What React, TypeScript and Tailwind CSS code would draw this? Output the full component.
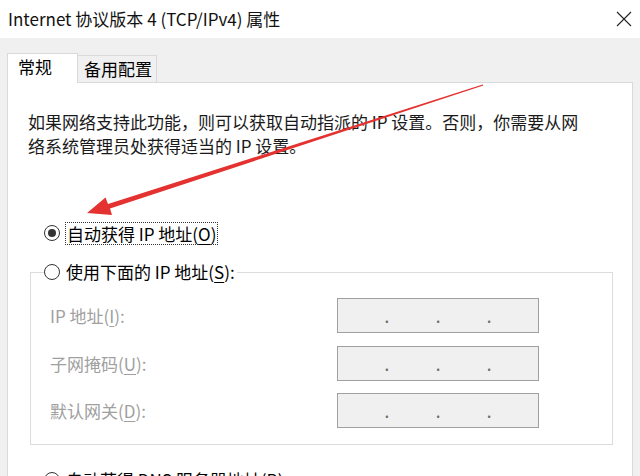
import React from "react";

const FONT = '"Noto Sans CJK SC", "Noto Sans", sans-serif';

function Radio({ checked }: { checked?: boolean }) {
  return (
    <span className="flex h-[16px] w-[16px] shrink-0 items-center justify-center rounded-full border border-[#333333] bg-white">
      {checked && <span className="h-[8px] w-[8px] rounded-full bg-[#333333]" />}
    </span>
  );
}

function IpBox() {
  return (
    <div className="flex h-[35px] w-[202px] items-center border border-[#a0a0a0] bg-[#f0f0f0] text-[13px] font-bold leading-none text-[#6d6d6d]">
      <span className="flex-1" />
      <span className="mt-[4px]">.</span>
      <span className="flex-1" />
      <span className="mt-[4px]">.</span>
      <span className="flex-1" />
      <span className="mt-[4px]">.</span>
      <span className="flex-1" />
    </div>
  );
}

function Row({ label, k, rest, mt }: { label: string; k: string; rest: string; mt: string }) {
  return (
    <div className={`flex items-center ${mt}`}>
      <div className="w-[287px] text-[17px] leading-[24px] text-[#a0a0a0]">
        {label}(<span className="underline underline-offset-[3px]">{k}</span>){rest}
      </div>
      <IpBox />
    </div>
  );
}

export default function App() {
  return (
    <div
      className="relative flex h-[476px] w-[640px] flex-col overflow-hidden bg-[#f0f0f0] text-black"
      style={{ fontFamily: FONT }}
    >
      {/* Title bar */}
      <div className="flex h-[38px] shrink-0 items-center justify-between bg-white pl-[8px] pr-[8px]">
        <span className="text-[17px] leading-[24px] text-[#111111]">Internet 协议版本 4 (TCP/IPv4) 属性</span>
        <svg width="16" height="16" viewBox="0 0 16 16">
          <path d="M1 1 L15 15 M15 1 L1 15" stroke="#222222" strokeWidth="1.1" fill="none" />
        </svg>
      </div>

      {/* Tabs */}
      <div className="mt-[15px] flex items-end pl-[7px]">
        <div className="relative z-10 -mb-px flex h-[30px] w-[71px] items-start border-l border-r border-t border-[#d9d9d9] bg-white pl-[10px] pt-[1px]">
          <span className="text-[17px] leading-[24px]">常规</span>
        </div>
        <div className="flex h-[27px] w-[79px] items-center border-r border-t border-[#d9d9d9] bg-[#f0f0f0] pl-[6px]">
          <span className="text-[17px] leading-[24px]">备用配置</span>
        </div>
      </div>

      {/* Panel */}
      <div className="ml-[7px] flex w-[626px] flex-1 flex-col border border-[#d9d9d9] bg-white pl-[20px] pt-[27px]">
        <p className="text-[17px] leading-[24px] text-[#1a1a1a]">
          如果网络支持此功能，则可以获取自动指派的 IP 设置。否则，你需要从网
          <br />
          络系统管理员处获得适当的 IP 设置。
        </p>

        <div className="ml-[16px] mt-[63px] flex h-[24px] items-center gap-[5px]">
          <Radio checked />
          <span className="border border-dotted border-[#333333] px-[1px] text-[17px] leading-[21px]">
            自动获得 IP 地址(<span className="underline underline-offset-[3px]">O</span>)
          </span>
        </div>

        {/* Group box */}
        <div className="ml-[2px] mt-[27px] flex w-[583px] flex-col border border-[#dcdcdc] pb-[16px] pl-[19px]">
          <div className="-ml-[6px] -mt-[13px] flex h-[24px] w-fit items-center gap-[6px] bg-white pr-[2px]">
            <Radio />
            <span className="text-[17px] leading-[24px]">
              使用下面的 IP 地址(<span className="underline underline-offset-[3px]">S</span>):
            </span>
          </div>
          <Row label="IP 地址" k="I" rest=":" mt="mt-[14px]" />
          <Row label="子网掩码" k="U" rest=":" mt="mt-[13px]" />
          <Row label="默认网关" k="D" rest=":" mt="mt-[12px]" />
        </div>

        <div className="ml-[16px] mt-[23px] flex h-[24px] items-center gap-[6px]">
          <Radio />
          <span className="text-[17px] leading-[24px]">
            自动获得 DNS 服务器地址(<span className="underline underline-offset-[3px]">B</span>)
          </span>
        </div>
      </div>

      {/* Red annotation arrow */}
      <svg
        className="pointer-events-none absolute left-0 top-0"
        width="640"
        height="476"
        viewBox="0 0 640 476"
      >
        <polygon
          points="483.3,85.5 482.7,84.5 108,204 105.5,197.5 87,213 112,215 110,208.5"
          fill="#e3322f"
        />
      </svg>
    </div>
  );
}
